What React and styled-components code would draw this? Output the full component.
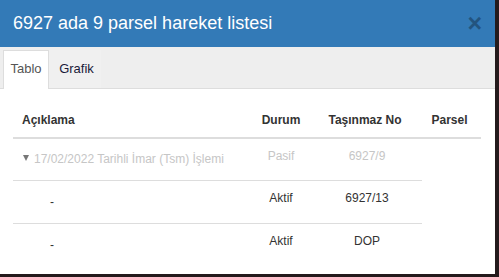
import React from "react";
import styled, { createGlobalStyle } from "styled-components";

const Global = createGlobalStyle`
  html, body { margin: 0; padding: 0; }
  body {
    background: #241a1c;
    font-family: "Liberation Sans", Arial, sans-serif;
    width: 499px;
    height: 277px;
    overflow: hidden;
  }
`;

const Modal = styled.div`
  width: 495px;
  height: 274px;
  background: #fff;
  display: flex;
  flex-direction: column;
  overflow: hidden;
`;

const Header = styled.div`
  height: 47px;
  background: #337ab7;
  display: flex;
  align-items: center;
  justify-content: space-between;
  padding: 0 13px 0 13px;
  box-sizing: border-box;
`;

const Title = styled.h4`
  margin: 0;
  color: #fff;
  font-size: 18px;
  font-weight: 500;
  line-height: 20px;
  padding-bottom: 2px;
`;

const Close = styled.span`
  color: #000;
  opacity: 0.3;
  font-size: 25px;
  font-weight: bold;
  line-height: 1;
  padding-bottom: 1px;
`;

const TabBar = styled.div`
  height: 42px;
  background: #eee;
  border-bottom: 1px solid #ddd;
  box-sizing: border-box;
  display: flex;
  align-items: flex-end;
  padding-left: 3px;
`;

const Tab = styled.div`
  box-sizing: border-box;
  display: flex;
  align-items: center;
  justify-content: center;
  font-size: 13px;
  color: ${(p) => (p.$active ? "#555" : "#1a1a3a")};
  background: ${(p) => (p.$active ? "#fff" : "#f0f0f0")};
  border: 1px solid ${(p) => (p.$active ? "#ddd" : "transparent")};
  border-bottom: none;
  margin-bottom: ${(p) => (p.$active ? "-1px" : "0")};
  height: ${(p) => (p.$active ? "39px" : "38px")};
  width: ${(p) => (p.$active ? "46px" : "52px")};
  padding-bottom: ${(p) => (p.$active ? "3px" : "2px")};
  padding-left: ${(p) => (p.$active ? "0" : "3px")};
`;

const Body = styled.div`
  padding: 0 14px 0 13px;
  font-size: 12px;
  color: #333;
`;

const HeadRow = styled.div`
  display: grid;
  grid-template-columns: 237px 62px 106px 63px;
  border-bottom: 2px solid #ddd;
  font-weight: bold;
  line-height: 18px;
`;

const HeadCell = styled.div`
  padding: 22px 0 8px ${(p) => (p.$left ? "9px" : "0")};
  text-align: ${(p) => (p.$left ? "left" : "center")};
`;

const Row = styled.div`
  display: grid;
  grid-template-columns: 237px 62px 110px;
  width: 409px;
  border-bottom: ${(p) => (p.$last ? "none" : "1px solid #ddd")};
  line-height: 18px;
  color: ${(p) => (p.$muted ? "#c6c6c6" : "#333")};
  height: ${(p) => p.$h}px;
  box-sizing: border-box;
`;

const Cell = styled.div`
  padding-top: ${(p) => p.$top}px;
  text-align: center;
`;

const DescCell = styled.div`
  padding-top: ${(p) => p.$top}px;
  padding-left: ${(p) => p.$indent}px;
  display: flex;
  align-items: center;
  align-self: start;
  gap: 5px;
`;

const Caret = styled.span`
  width: 0;
  height: 0;
  border-left: 3.5px solid transparent;
  border-right: 3.5px solid transparent;
  border-top: 6px solid #777;
  margin-top: -2px;
`;

export default function App() {
  return (
    <>
      <Global />
      <Modal>
        <Header>
          <Title>6927 ada 9 parsel hareket listesi</Title>
          <Close>×</Close>
        </Header>
        <TabBar>
          <Tab $active>Tablo</Tab>
          <Tab>Grafik</Tab>
        </TabBar>
        <Body>
          <HeadRow>
            <HeadCell $left>Açıklama</HeadCell>
            <HeadCell>Durum</HeadCell>
            <HeadCell>Taşınmaz No</HeadCell>
            <HeadCell>Parsel</HeadCell>
          </HeadRow>
          <Row $muted $h={42}>
            <DescCell $top={11} $indent={10}>
              <Caret />
              17/02/2022 Tarihli İmar (Tsm) İşlemi
            </DescCell>
            <Cell $top={8}>Pasif</Cell>
            <Cell $top={8}>6927/9</Cell>
          </Row>
          <Row $h={43}>
            <DescCell $top={12} $indent={37}>-</DescCell>
            <Cell $top={8}>Aktif</Cell>
            <Cell $top={8}>6927/13</Cell>
          </Row>
          <Row $last $h={43}>
            <DescCell $top={12} $indent={37}>-</DescCell>
            <Cell $top={8}>Aktif</Cell>
            <Cell $top={8}>DOP</Cell>
          </Row>
        </Body>
      </Modal>
    </>
  );
}
